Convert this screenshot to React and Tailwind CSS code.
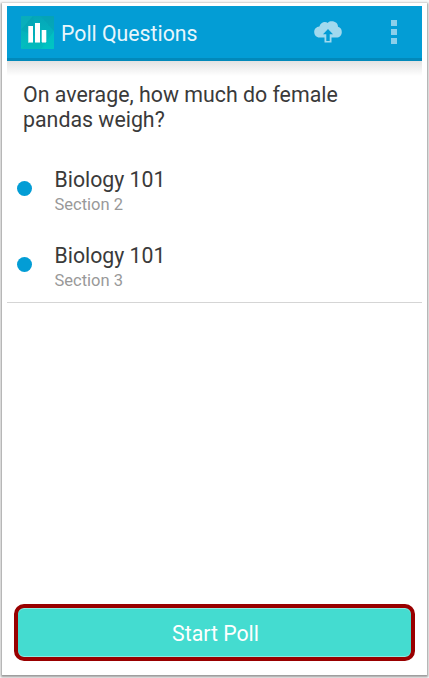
const sections = [
  { id: 2, course: "Biology 101", name: "Section 2" },
  { id: 3, course: "Biology 101", name: "Section 3" },
];

const AppLogo = () => (
  <svg width="33" height="33" viewBox="0 0 33 33" className="shrink-0">
    <defs>
      <linearGradient id="logoBg" x1="0" y1="0" x2="0" y2="1">
        <stop offset="0" stopColor="#05a6b8" />
        <stop offset="1" stopColor="#02c0c0" />
      </linearGradient>
    </defs>
    <rect width="33" height="33" rx="1" fill="url(#logoBg)" />
    <path d="M0 0h12L0 14z" fill="#0bb0bc" opacity=".6" />
    <path d="M20 0l13 15V0z" fill="#069fb4" opacity=".5" />
    <path d="M12 0L0 14l14 6z" fill="#059fb2" opacity=".4" />
    <path d="M0 33l15-13 9 13z" fill="#04b5ba" opacity=".5" />
    <path d="M33 15L20 33h13z" fill="#00c9c6" opacity=".5" />
    <path d="M7 26h5v1H7zM14 26h5v1h-5zM21 26h4v1h-4z" fill="#8fdcdf" />
    <path d="M7.300 10h4.700v16H7.300zM14 7h5v19h-5zM20.700 14h4.600v12h-4.600z" fill="#fff" />
  </svg>
);

const CloudUploadIcon = () => (
  <svg width="28" height="22" viewBox="0 0 28 22">
    <path
      d="M5.500 16.500C2.400 16.500.2 14 .2 11c0-2.800 2-5.200 5.200-5.500C6.200 2.500 8.500 1 10.800 1c1.200 0 2.200.3 3 .9C14.800.7 16.200.3 17.600.3c4 0 6.400 2.300 6.400 5.500 2.400.5 3.800 2.600 3.800 5.100 0 3.300-2.200 5.600-5.300 5.600z"
      fill="#a1d9ee"
    />
    <path d="M10.500 14h7v7.500h-7z" fill="#a1d9ee" />
    <path d="M14 8l5 5.200h-3.300V20h-3.400v-6.800H9z" fill="#039dd5" />
  </svg>
);

const Header = () => (
  <header className="flex h-[55px] items-center border-b-3 border-[#0289ba] bg-[#039dd5] pl-3.5 pr-[25px]">
    <AppLogo />
    <h1 className="ml-[7px] flex-1 pt-[3px] text-[21.250px] leading-6 text-[#e8f6fc]">Poll Questions</h1>
    <button className="mr-[49px]" aria-label="Upload">
      <CloudUploadIcon />
    </button>
    <button className="flex flex-col gap-[3px]" aria-label="More options">
      <span className="size-1.5 bg-[#8bcfea]" />
      <span className="size-1.5 bg-[#8bcfea]" />
      <span className="size-1.5 bg-[#8bcfea]" />
    </button>
  </header>
);

const SectionRow = ({ course, name }) => (
  <li className="flex h-[75.500px] items-center pl-2.5">
    <span className="size-[15px] rounded-full bg-[#039dd5]" />
    <div className="ml-[22.500px] pt-[7px]">
      <p className="text-[21.250px] leading-[26px] text-[#3a3a3a]">{course}</p>
      <p className="text-[16.500px] leading-6 text-[#999]">{name}</p>
    </div>
  </li>
);

const App = () => {
  return (
    <div className="h-[678px] w-[429px] bg-[#f8f8f8] px-0.5 pt-[3px] font-[Roboto,sans-serif]">
      <div className="flex h-[672px] flex-col bg-white px-[5px] pt-[3px] shadow-[0_1px_2px_1px_#999]">
        <Header />
        <main className="flex flex-1 flex-col">
          <div className="h-[15px] bg-linear-to-b from-[#e2e2e2] to-white" />
          <h2 className="px-4 pt-1.5 text-[21.350px] leading-[25px] text-[#3a3a3a]">
            On average, how much do female
            <br />
            pandas weigh?
          </h2>
          <ul className="mt-[19px] border-b border-[#d5d5d5]">
            {sections.map((section) => (
              <SectionRow key={section.id} course={section.course} name={section.name} />
            ))}
          </ul>
        </main>
        <button className="mx-[7px] mb-3.5 h-[57px] rounded-[10px] border-4 border-[#990000] bg-[#44dcd0] pl-0.5 pt-[3px] text-[21.250px] text-white shadow-[inset_0_1px_0_#8eeae2,inset_0_-1px_0_#8eeae2]">
          Start Poll
        </button>
      </div>
    </div>
  );
};

export default App;
